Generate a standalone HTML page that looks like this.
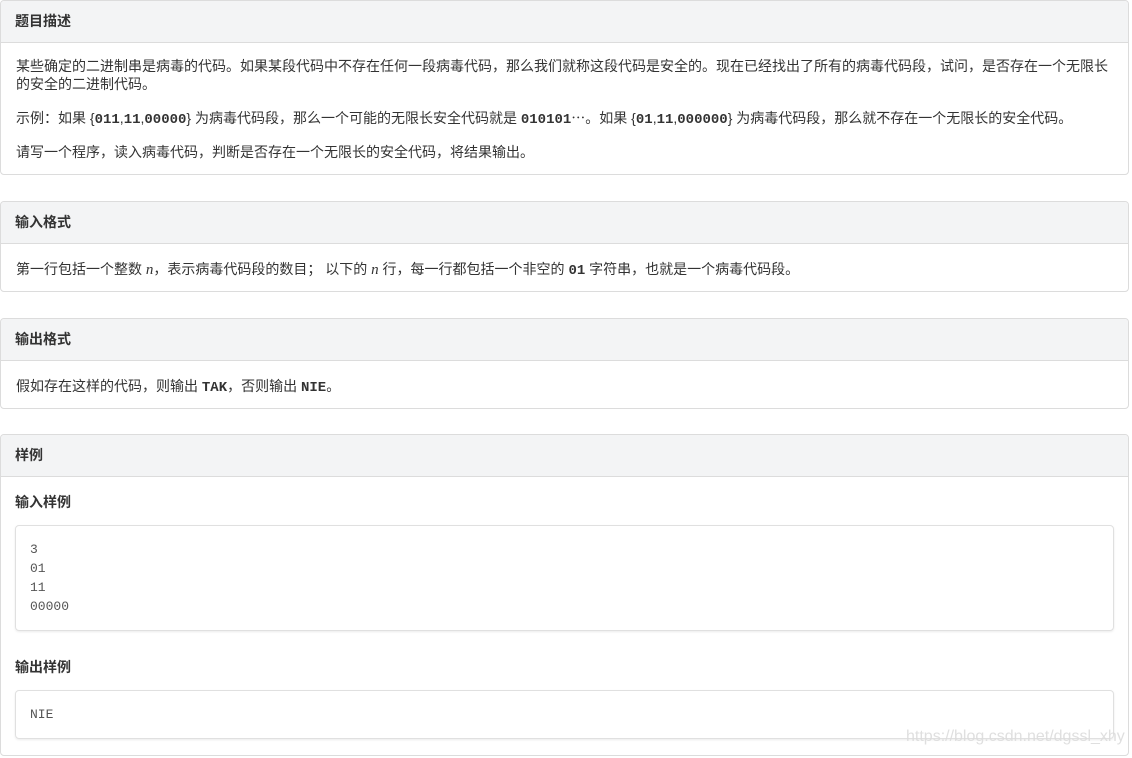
<!DOCTYPE html>
<html><head><meta charset="utf-8"><style>
*{box-sizing:border-box;margin:0;padding:0}
body{width:1132px;height:758px;background:#fff;font-family:"Liberation Sans","Noto Sans CJK SC",sans-serif;font-size:14px;color:#333;position:relative;overflow:hidden}
.p{position:absolute;left:0;width:1129px;border:1px solid #dcdcdc;border-radius:4px;overflow:hidden}
.h{height:42px;background:#f3f4f5;border-bottom:1px solid #dcdcdc;font-weight:bold;font-size:14px;line-height:41px;padding-left:14px;color:#333}
.t{position:absolute;left:15px;line-height:18px;white-space:nowrap;font-size:14px}
code,.m{font-family:"Liberation Mono","DejaVu Sans Mono",monospace;font-weight:bold;font-size:14px}
i{font-family:"Liberation Serif",serif;font-size:15px}
.s{position:absolute;left:14px;font-weight:bold;font-size:14px}
.c{position:absolute;left:14px;width:1099px;border:1px solid #e0e0e0;border-radius:4px;box-shadow:0 1px 2px rgba(0,0,0,.08);font-family:"Liberation Mono","DejaVu Sans Mono",monospace;font-size:13px;color:#555;line-height:19px;padding:14px 0 0 14px}
.w{position:absolute;left:906px;top:728px;font-size:16px;color:rgba(220,220,220,.9);font-family:"Liberation Sans",sans-serif}
</style></head><body>
<div class="p" style="top:0;height:175px"><div class="h">题目描述</div>
<div class="t" style="top:56px">某些确定的二进制串是病毒的代码。如果某段代码中不存在任何一段病毒代码，那么我们就称这段代码是安全的。现在已经找出了所有的病毒代码段，试问，是否存在一个无限长<br>的安全的二进制代码。</div>
<div class="t" style="top:108px">示例：如果 {<code>011</code>,<code>11</code>,<code>00000</code>} 为病毒代码段，那么一个可能的无限长安全代码就是 <code>010101</code>⋯。如果 {<code>01</code>,<code>11</code>,<code>000000</code>} 为病毒代码段，那么就不存在一个无限长的安全代码。</div>
<div class="t" style="top:142px">请写一个程序，读入病毒代码，判断是否存在一个无限长的安全代码，将结果输出。</div>
</div>
<div class="p" style="top:201px;height:91px"><div class="h">输入格式</div>
<div class="t" style="top:58px">第一行包括一个整数 <i>n</i>，表示病毒代码段的数目； 以下的 <i>n</i> 行，每一行都包括一个非空的 <code>01</code> 字符串，也就是一个病毒代码段。</div>
</div>
<div class="p" style="top:318px;height:91px"><div class="h">输出格式</div>
<div class="t" style="top:58px">假如存在这样的代码，则输出 <code>TAK</code>，否则输出 <code>NIE</code>。</div>
</div>
<div class="p" style="top:434px;height:322px"><div class="h">样例</div>
<div class="s" style="top:57px">输入样例</div>
<div class="c" style="top:90px;height:106px">3<br>01<br>11<br>00000</div>
<div class="s" style="top:222px">输出样例</div>
<div class="c" style="top:255px;height:49px">NIE</div>
</div>
<div class="w">https://blog.csdn.net/dgssl_xhy</div>
</body></html>
